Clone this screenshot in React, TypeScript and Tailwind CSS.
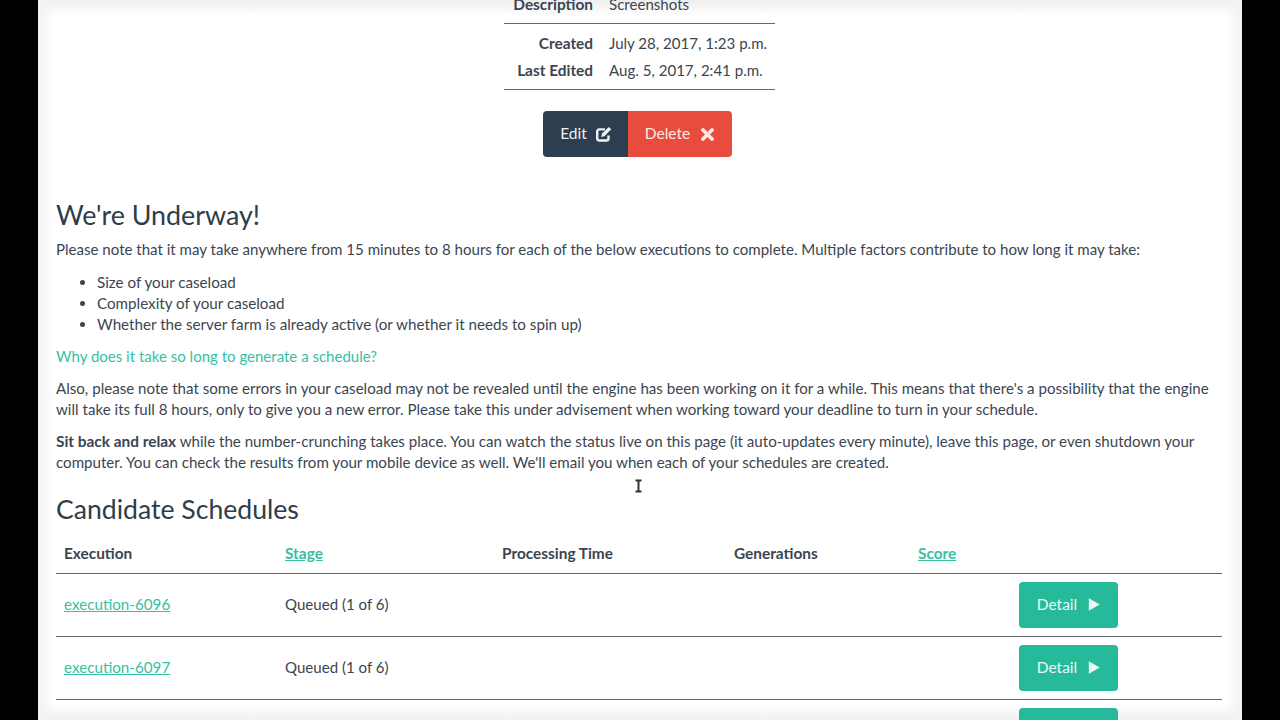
import { ReactNode } from "react";

const EditIcon = () => (
  <svg width="16" height="16" viewBox="0 0 16 16" fill="none" stroke="currentColor" strokeWidth="2.4">
    <path d="M12.5 9.5v3a2 2 0 0 1-2 2H3.2a2 2 0 0 1-2-2V5.4a2 2 0 0 1 2-2H9" />
    <path d="M5.2 11l.8-3.4L12.8.9l2.4 2.4L8.4 10.2z" fill="currentColor" stroke="none" />
  </svg>
);

const Play = () => (
  <svg width="12" height="13" viewBox="0 0 12 13" fill="currentColor">
    <path d="M.8.3L11.8 6.5.8 12.7z" />
  </svg>
);

const Cross = () => (
  <svg width="13" height="13" viewBox="0 0 13 13" stroke="currentColor" strokeWidth="3.8" strokeLinecap="round">
    <path d="M2 2l9 9M11 2l-9 9" />
  </svg>
);

const DetailButton = () => (
  <button className="flex h-[46px] w-[99px] items-center justify-center gap-[11px] rounded-[4px] bg-[#26b99a] text-[15.5px] text-[#e8faf5]">
    Detail <Play />
  </button>
);

function MetaRow({ label, children }: { label: string; children: ReactNode }) {
  return (
    <div className="flex h-[27px] items-center">
      <div className="w-[89px] text-right text-[15.4px] font-bold">{label}</div>
      <div className="pl-[16px]">{children}</div>
    </div>
  );
}

const rows = ["execution-6096", "execution-6097"];

export default function App() {
  return (
    <div className="relative h-[720px] overflow-hidden bg-black font-['Lato','Open_Sans',sans-serif] text-[15.07px] text-[#3b4550]">
      <div className="relative mx-[38px] h-[720px] overflow-hidden bg-white">
        {/* soft fade round the video frame, sits behind the content */}
        <div className="absolute inset-x-0 top-0 h-[16px] bg-gradient-to-b from-[#eeeeee] to-transparent" />
        <div className="absolute inset-x-0 bottom-0 h-[16px] bg-gradient-to-t from-[#f0f0f0] to-transparent" />
        <div className="absolute inset-y-0 left-0 w-[18px] bg-gradient-to-r from-[#f3f3f3] to-transparent" />
        <div className="absolute inset-y-0 right-0 w-[18px] bg-gradient-to-l from-[#f3f3f3] to-transparent" />

        <div className="relative px-[18px]">
          <div className="ml-[448px] w-[271px]">
            <div className="flex h-[24px] items-end border-b border-[#666] pb-[7px]">
              <div className="w-[89px] text-right text-[15.4px] font-bold">Description</div>
              <div className="pl-[16px]">Screenshots</div>
            </div>
            <div className="border-b border-[#666] pb-[5px] pt-[6px]">
              <MetaRow label="Created">July 28, 2017, 1:23 p.m.</MetaRow>
              <MetaRow label="Last Edited">Aug. 5, 2017, 2:41 p.m.</MetaRow>
            </div>
          </div>

          <div className="mt-[21px] flex justify-center pr-[6px]">
            <button className="flex h-[46px] w-[85px] items-center justify-center gap-[9px] rounded-l-[4px] bg-[#2c3e50] pl-[2px] text-[15.5px] text-[#eef1f3]">
              Edit <EditIcon />
            </button>
            <button className="flex h-[46px] w-[104px] items-center justify-center gap-[11px] rounded-r-[4px] bg-[#e74c3c] text-[15.5px] text-[#fde9e6]">
              Delete <Cross />
            </button>
          </div>

          <h2 className="mt-[40px] text-[26.85px] leading-[36px] font-normal text-[#2f3d4b]">We're Underway!</h2>
          <p className="mt-[6px] leading-[21px]">
            Please note that it may take anywhere from 15 minutes to 8 hours for each of the below executions to complete. Multiple factors contribute to how long it may take:
          </p>
          <ul className="mt-[12px] list-disc pl-[41px] text-[15.2px] leading-[21.2px]">
            <li>Size of your caseload</li>
            <li>Complexity of your caseload</li>
            <li>Whether the server farm is already active (or whether it needs to spin up)</li>
          </ul>
          <p className="mt-[10px] leading-[21px]">
            <a className="text-[15.03px] text-[#37bfa2]">Why does it take so long to generate a schedule?</a>
          </p>
          <p className="mt-[11px] text-[15.11px] leading-[21px]">
            Also, please note that some errors in your caseload may not be revealed until the engine has been working on it for a while. This means that there's a possibility that the engine will take its full 8 hours, only to give you a new error. Please take this under advisement when working toward your deadline to turn in your schedule.
          </p>
          <p className="mt-[11px] text-[15.11px] leading-[21px]">
            <b className="text-[15.4px]">Sit back and relax</b> while the number-crunching takes place. You can watch the status live on this page (it auto-updates every minute), leave this page, or even shutdown your computer. You can check the results from your mobile device as well. We'll email you when each of your schedules are created.
          </p>

          <h2 className="mt-[18px] text-[26.6px] leading-[36px] font-normal text-[#2f3d4b]">Candidate Schedules</h2>

          <div className="mt-[3px] w-[1166px]">
            <div className="grid h-[44px] grid-cols-[221px_217px_232px_184px_1fr] items-center border-b border-[#666] pl-[8px] pt-[4px] text-[15.4px] font-bold">
              <div>Execution</div>
              <div className="text-[#37bfa2] underline">Stage</div>
              <div>Processing Time</div>
              <div>Generations</div>
              <div className="text-[#37bfa2] underline">Score</div>
            </div>
            {rows.map((name) => (
              <div key={name} className="grid h-[63px] grid-cols-[221px_217px_232px_184px_101px_1fr] items-center border-b border-[#666] pl-[8px]">
                <a className="text-[15.2px] text-[#37bfa2] underline">{name}</a>
                <div>Queued (1 of 6)</div>
                <div />
                <div />
                <div />
                <DetailButton />
              </div>
            ))}
            <div className="ml-[963px] mt-[8px]">
              <DetailButton />
            </div>
          </div>
        </div>
      </div>
      <svg className="absolute left-[634px] top-[479px]" width="9" height="14" viewBox="0 0 9 14" fill="none">
        <path d="M1 1h7M1 13h7M4.5 1v12" stroke="#fff" strokeWidth="3" />
        <path d="M1.5 1.4h6M1.5 12.6h6M4.5 1.4v11.2" stroke="#333" strokeWidth="2" />
      </svg>
    </div>
  );
}
